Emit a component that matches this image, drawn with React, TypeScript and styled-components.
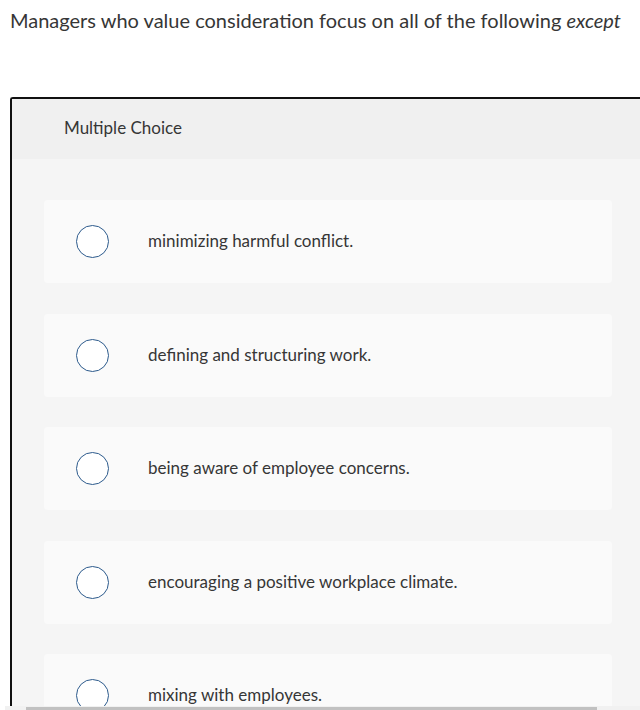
import { createGlobalStyle, styled } from "styled-components";

const GlobalStyle = createGlobalStyle`
  html, body {
    margin: 0;
    padding: 0;
    background: #ffffff;
    overflow: hidden;
  }
  body {
    font-family: Lato, "Open Sans", "Liberation Sans", sans-serif;
    color: #2b2b2b;
  }
`;

const Page = styled.div`
  width: 640px;
  height: 710px;
  overflow: hidden;
  position: relative;
`;

const Question = styled.p`
  margin: 0;
  padding: 7px 0 0 10px;
  font-size: 20px;
  line-height: 26px;
  white-space: nowrap;
  color: #363636;

  em {
    font-style: italic;
  }
`;

const Card = styled.section`
  margin: 64px 0 0 10px;
  width: 634px;
  border-left: 2px solid #111;
  border-top: 2px solid #111;
  border-top-left-radius: 3px;
  background: #f5f5f5;
`;

const CardHeader = styled.div`
  height: 60px;
  box-sizing: border-box;
  display: flex;
  align-items: center;
  padding: 0 0 3px 52px;
  background: #f0f0f0;
  font-size: 17px;
  color: #363636;
`;

const Options = styled.ul`
  list-style: none;
  margin: 0;
  padding: 41px 32px 0 32px;
  display: flex;
  flex-direction: column;
  gap: 30.5px;
`;

const Option = styled.li`
  height: 83px;
  width: 568px;
  box-sizing: border-box;
  background: #fafafa;
  border-radius: 4px;
  display: flex;
  align-items: center;
  padding: 0 0 2px 32px;
`;

const Radio = styled.span`
  width: 31px;
  height: 31px;
  border-radius: 50%;
  border: 1.5px solid #2c5a8c;
  background: #ffffff;
  flex-shrink: 0;
  margin-top: 2px;
`;

const Label = styled.span`
  margin-left: 39px;
  font-size: 17px;
  color: #363636;
`;

const ScrollTrack = styled.div`
  position: absolute;
  left: 5px;
  right: 0;
  bottom: 0;
  height: 4px;
  background: #f1f1f1;
`;

const ScrollThumb = styled.div`
  margin-left: 21px;
  width: 571px;
  height: 3px;
  margin-top: 1px;
  background: #c1c1c1;
`;

const choices = [
  "minimizing harmful conflict.",
  "defining and structuring work.",
  "being aware of employee concerns.",
  "encouraging a positive workplace climate.",
  "mixing with employees.",
];

export default function App() {
  return (
    <>
      <GlobalStyle />
      <Page>
        <Question>
          Managers who value consideration focus on all of the following <em>except</em>
        </Question>
        <Card>
          <CardHeader>Multiple Choice</CardHeader>
          <Options>
            {choices.map((c) => (
              <Option key={c}>
                <Radio />
                <Label>{c}</Label>
              </Option>
            ))}
          </Options>
        </Card>
        <ScrollTrack>
          <ScrollThumb />
        </ScrollTrack>
      </Page>
    </>
  );
}
